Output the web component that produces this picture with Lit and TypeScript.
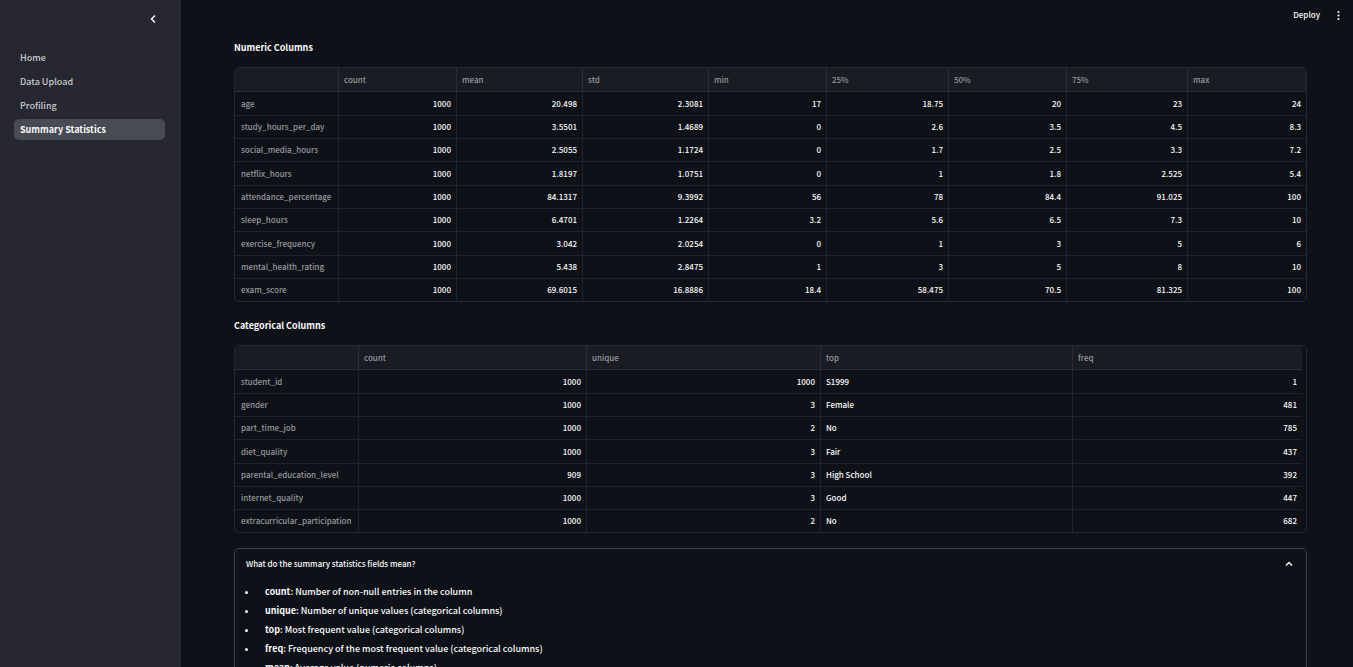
import { LitElement, html, css } from "lit";
import { customElement, property, state } from "lit/decorators.js";
import { classMap } from "lit/directives/class-map.js";

interface Column {
  name: string;
  weight: number;
  text?: boolean;
}

const numericColumns: Column[] = [
  { name: "", weight: 104 },
  { name: "count", weight: 118 },
  { name: "mean", weight: 126 },
  { name: "std", weight: 126 },
  { name: "min", weight: 118 },
  { name: "25%", weight: 122 },
  { name: "50%", weight: 118 },
  { name: "75%", weight: 121 },
  { name: "max", weight: 118 },
];

const numericRows: string[][] = [
  ["age", "1000", "20.498", "2.3081", "17", "18.75", "20", "23", "24"],
  ["study_hours_per_day", "1000", "3.5501", "1.4689", "0", "2.6", "3.5", "4.5", "8.3"],
  ["social_media_hours", "1000", "2.5055", "1.1724", "0", "1.7", "2.5", "3.3", "7.2"],
  ["netflix_hours", "1000", "1.8197", "1.0751", "0", "1", "1.8", "2.525", "5.4"],
  ["attendance_percentage", "1000", "84.1317", "9.3992", "56", "78", "84.4", "91.025", "100"],
  ["sleep_hours", "1000", "6.4701", "1.2264", "3.2", "5.6", "6.5", "7.3", "10"],
  ["exercise_frequency", "1000", "3.042", "2.0254", "0", "1", "3", "5", "6"],
  ["mental_health_rating", "1000", "5.438", "2.8475", "1", "3", "5", "8", "10"],
  ["exam_score", "1000", "69.6015", "16.8886", "18.4", "58.475", "70.5", "81.325", "100"],
];

const categoricalColumns: Column[] = [
  { name: "", weight: 124 },
  { name: "count", weight: 228 },
  { name: "unique", weight: 234 },
  { name: "top", weight: 252, text: true },
  { name: "freq", weight: 229 },
];

const categoricalRows: string[][] = [
  ["student_id", "1000", "1000", "S1999", "1"],
  ["gender", "1000", "3", "Female", "481"],
  ["part_time_job", "1000", "2", "No", "785"],
  ["diet_quality", "1000", "3", "Fair", "437"],
  ["parental_education_level", "909", "3", "High School", "392"],
  ["internet_quality", "1000", "3", "Good", "447"],
  ["extracurricular_participation", "1000", "2", "No", "682"],
];

const fields: [string, string][] = [
  ["count", "Number of non-null entries in the column"],
  ["unique", "Number of unique values (categorical columns)"],
  ["top", "Most frequent value (categorical columns)"],
  ["freq", "Frequency of the most frequent value (categorical columns)"],
  ["mean", "Average value (numeric columns)"],
];

@customElement("data-grid")
export class DataGrid extends LitElement {
  @property({ attribute: false }) columns: Column[] = [];
  @property({ attribute: false }) rows: string[][] = [];
  @property() label = "";
  @property({ type: Boolean, reflect: true }) gutter = false;

  static styles = css`
    :host {
      display: block;
      border: 1px solid #262930;
      border-radius: 5px;
      overflow: hidden;
    }
    :host([gutter]) {
      padding-right: 4px;
    }
    table {
      width: 100%;
      table-layout: fixed;
      border-collapse: separate;
      border-spacing: 0;
      font-size: 8px;
      line-height: 12px;
    }
    th,
    td {
      box-sizing: border-box;
      height: 23px;
      padding: 0 5px;
      border-right: 1px solid #20232a;
      border-bottom: 1px solid #20232a;
      text-align: right;
      font-weight: 500;
      white-space: nowrap;
      color: #fafafa;
    }
    th {
      text-align: left;
      color: #97989d;
    }
    thead th {
      height: 24px;
      background: #1a1c24;
      border-color: #2a2d34;
    }
    tbody th {
      padding-left: 6px;
    }
    tbody tr:nth-child(3n + 1) > * {
      height: 24px;
    }
    tr > :last-child {
      border-right: 0;
    }
    tbody tr:last-child > * {
      height: 22px;
      border-bottom: 0;
    }
    .text {
      text-align: left;
    }
  `;

  render() {
    const total = this.columns.reduce((sum, c) => sum + c.weight, 0);
    return html`
      <table aria-label=${this.label}>
        <colgroup>
          ${this.columns.map((c) => html`<col style="width:${(c.weight / total) * 100}%" />`)}
        </colgroup>
        <thead>
          <tr>
            ${this.columns.map((c) => html`<th scope="col">${c.name}</th>`)}
          </tr>
        </thead>
        <tbody>
          ${this.rows.map(
            (row) => html`<tr>
              ${row.map((cell, i) =>
                i === 0
                  ? html`<th scope="row">${cell}</th>`
                  : html`<td class=${classMap({ text: !!this.columns[i].text })}>${cell}</td>`
              )}
            </tr>`
          )}
        </tbody>
      </table>
    `;
  }
}

@customElement("app-root")
export class AppRoot extends LitElement {
  @state() private page = "Summary Statistics";

  static styles = css`
    :host {
      display: flex;
      height: 100vh;
      overflow: hidden;
      background: #0e1117;
      color: #fafafa;
      font-family: "Noto Sans CJK SC", "Open Sans", sans-serif;
      font-size: 9px;
      line-height: 16px;
      font-weight: 500;
    }
    button {
      display: flex;
      align-items: center;
      padding: 0;
      border: 0;
      background: none;
      color: inherit;
      font: inherit;
      cursor: pointer;
    }
    svg {
      display: block;
      fill: none;
      stroke: currentColor;
    }
    .sidebar {
      flex: none;
      box-sizing: border-box;
      width: 181px;
      padding: 11px 16px 0 14px;
      background: #262730;
    }
    .collapse {
      margin: 0 4px 20px auto;
    }
    nav {
      display: flex;
      flex-direction: column;
      gap: 3px;
    }
    .link {
      padding: 3px 6px 2px;
      border-radius: 5px;
      color: #c9cacd;
      text-decoration: none;
    }
    .active {
      background: #484a54;
      color: #fafafa;
      font-weight: 700;
    }
    .main {
      flex: 1;
      min-width: 0;
      overflow-y: auto;
      scrollbar-width: none;
    }
    .toolbar {
      display: flex;
      justify-content: flex-end;
      align-items: center;
      gap: 10px;
      height: 30px;
      padding-right: 7px;
    }
    .deploy {
      font-size: 8px;
    }
    .content {
      padding: 10px 46px 40px 53px;
    }
    h2 {
      margin: 0 0 11px;
      font-size: 9px;
      line-height: 16px;
      font-weight: 700;
    }
    .section {
      margin-bottom: 16px;
    }
    .section:last-of-type {
      margin-bottom: 15px;
    }
    details {
      border: 1px solid #3d4046;
      border-radius: 5px;
    }
    summary {
      display: flex;
      justify-content: space-between;
      align-items: center;
      height: 30px;
      padding: 0 11px;
      font-size: 8px;
      list-style: none;
      cursor: pointer;
    }
    details:not([open]) .chevron {
      transform: rotate(180deg);
    }
    ul {
      display: grid;
      gap: 3px;
      margin: 0;
      padding: 5px 10px 12px;
      list-style: none;
    }
    li {
      display: flex;
      align-items: center;
      gap: 17px;
    }
    li::before {
      content: "";
      flex: none;
      width: 3px;
      height: 3px;
      border-radius: 50%;
      background: currentColor;
    }
  `;

  private go(event: Event, name: string) {
    event.preventDefault();
    this.page = name;
  }

  render() {
    return html`
      <aside class="sidebar">
        <button class="collapse" aria-label="Collapse sidebar">
          <svg width="16" height="16" viewBox="0 0 16 16" stroke-width="1.5">
            <path d="M10 4.5 6.5 8 10 11.5" />
          </svg>
        </button>
        <nav>
          ${["Home", "Data Upload", "Profiling", "Summary Statistics"].map(
            (name) => html`<a
              href="#"
              class=${classMap({ link: true, active: name === this.page })}
              @click=${(e: Event) => this.go(e, name)}
              >${name}</a
            >`
          )}
        </nav>
      </aside>
      <main class="main">
        <header class="toolbar">
          <button class="deploy">Deploy</button>
          <button aria-label="Main menu">
            <svg width="16" height="16" viewBox="0 0 16 16">
              <g fill="currentColor" stroke="none">
                <circle cx="8.5" cy="5" r="1.1" />
                <circle cx="8.5" cy="8.5" r="1.1" />
                <circle cx="8.5" cy="12" r="1.1" />
              </g>
            </svg>
          </button>
        </header>
        <div class="content">
          <section class="section">
            <h2>Numeric Columns</h2>
            <data-grid label="Numeric Columns" .columns=${numericColumns} .rows=${numericRows}></data-grid>
          </section>
          <section class="section">
            <h2>Categorical Columns</h2>
            <data-grid
              gutter
              label="Categorical Columns"
              .columns=${categoricalColumns}
              .rows=${categoricalRows}
            ></data-grid>
          </section>
          <details open>
            <summary>
              What do the summary statistics fields mean?
              <svg class="chevron" width="12" height="12" viewBox="0 0 12 12" stroke-width="1.3">
                <path d="M3 7.5 6 4.5 9 7.5" />
              </svg>
            </summary>
            <ul>
              ${fields.map(([name, text]) => html`<li><span><strong>${name}</strong>: ${text}</span></li>`)}
            </ul>
          </details>
        </div>
      </main>
    `;
  }
}
